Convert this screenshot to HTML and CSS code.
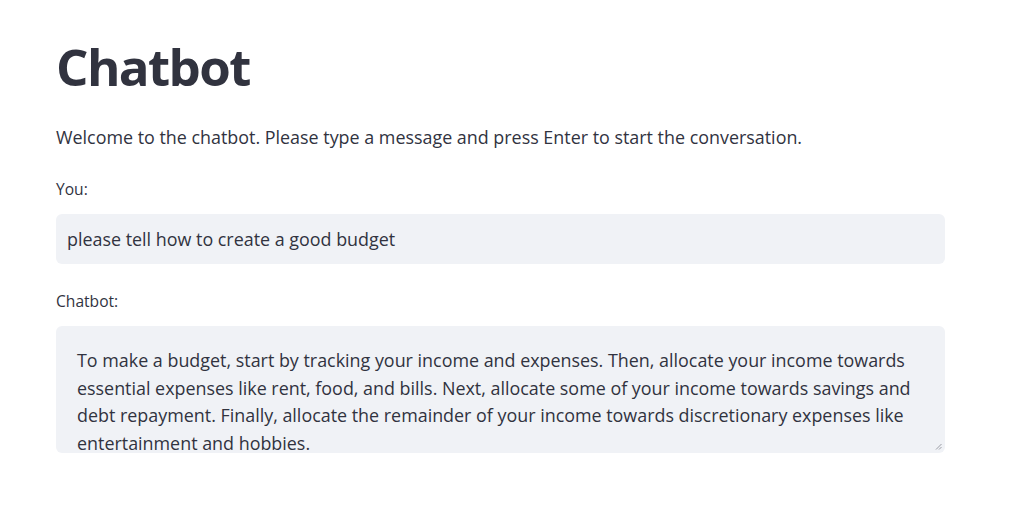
FILE: index.html
```html
<!DOCTYPE html>
<html lang="en">
<head>
  <meta charset="UTF-8">
  <title>Chatbot</title>
  <link rel="stylesheet" href="styles.css">
</head>
<body>
  <main class="block-container">
    <h1 class="title">Chatbot</h1>
    <p class="intro">Welcome to the chatbot. Please type a message and press Enter to start the conversation.</p>

    <div class="field">
      <label class="field-label" for="user-input">You:</label>
      <input type="text" id="user-input" class="text-input" value="please tell how to create a good budget">
    </div>

    <div class="field">
      <label class="field-label">Chatbot:</label>
      <div class="text-area">
        <div class="text-area-content">To make a budget, start by tracking your income and expenses. Then, allocate your income towards essential expenses like rent, food, and bills. Next, allocate some of your income towards savings and debt repayment. Finally, allocate the remainder of your income towards discretionary expenses like entertainment and hobbies.</div>
        <svg class="resize-grip" width="7" height="7" viewBox="0 0 7 7">
          <path d="M6.5 1 L1 6.5 M6.5 4 L4 6.5" stroke="#9a9ca4" stroke-width="1" fill="none"/>
        </svg>
      </div>
    </div>
  </main>
</body>
</html>
```

FILE: styles.css
```css
body {
  margin: 0;
  padding: 0;
  background-color: #ffffff;
  color: #31333f;
  font-family: "Source Sans Pro", "Open Sans", sans-serif;
}
.block-container {
  width: 889px;
  padding: 36px 0 0 56px;
}
.title {
  margin: 0;
  font-size: 51px;
  line-height: 60px;
  font-weight: 700;
  letter-spacing: -1.6px;
}
.intro {
  margin: 27px 0 0;
  font-size: 17.9px;
  line-height: 28px;
}
.field {
  margin-top: 27px;
}
.field + .field {
  margin-top: 26px;
}
.field-label {
  display: block;
  font-size: 15.6px;
  line-height: 22px;
  margin-bottom: 14px;
}
.text-input {
  display: block;
  box-sizing: border-box;
  width: 100%;
  height: 50px;
  padding: 0 11px;
  border: none;
  border-radius: 6px;
  background-color: #f0f2f6;
  color: #31333f;
  font-family: inherit;
  font-size: 17.9px;
  outline: none;
}
.text-area {
  position: relative;
  box-sizing: border-box;
  height: 127px;
  padding: 21px 28px 0 21px;
  border-radius: 6px;
  background-color: #f0f2f6;
  overflow: hidden;
}
.text-area-content {
  font-size: 17.9px;
  line-height: 27.5px;
}
.resize-grip {
  position: absolute;
  right: 3px;
  bottom: 3px;
}
```
